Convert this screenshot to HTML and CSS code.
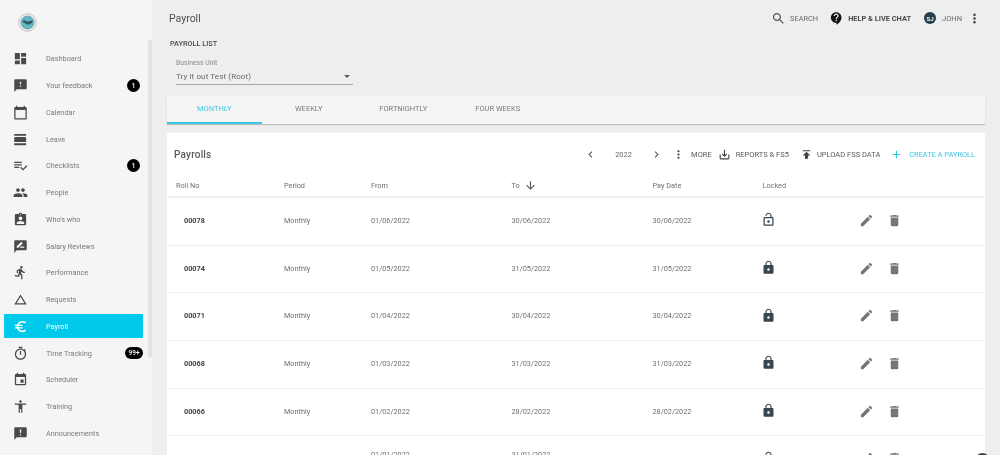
FILE: index.html
```html
<!DOCTYPE html>
<html lang="en">
<head>
<meta charset="utf-8">
<title>Payroll</title>
<link rel="stylesheet" href="styles.css">
</head>
<body>
<svg class="sprite" aria-hidden="true">
<symbol id="i-dashboard" viewBox="0 0 24 24"><path d="M3 13h8V3H3v10zm0 8h8v-6H3v6zm10 0h8V11h-8v10zm0-18v6h8V3h-8z"/></symbol>
<symbol id="i-feedback" viewBox="0 0 24 24"><path d="M20 2H4c-1.1 0-1.99.9-1.99 2L2 22l4-4h14c1.1 0 2-.9 2-2V4c0-1.1-.9-2-2-2zm-7 12h-2v-2h2v2zm0-4h-2V6h2v4z"/></symbol>
<symbol id="i-calendar" viewBox="0 0 24 24"><path d="M20 3h-1V1h-2v2H7V1H5v2H4c-1.1 0-2 .9-2 2v16c0 1.1.9 2 2 2h16c1.1 0 2-.9 2-2V5c0-1.1-.9-2-2-2zm0 18H4V8h16v13z"/></symbol>
<symbol id="i-leave" viewBox="0 0 24 24"><path d="M2 21h19v-3H2v3zM20 8H3c-.55 0-1 .45-1 1v6c0 .55.45 1 1 1h17c.55 0 1-.45 1-1V9c0-.55-.45-1-1-1zM2 3v3h19V3H2z"/></symbol>
<symbol id="i-check" viewBox="0 0 24 24"><path d="M14 10H2v2h12v-2zm0-4H2v2h12V6zM2 16h8v-2H2v2zm19.5-4.5L23 13l-6.99 7-4.51-4.5L13 14l3.01 3 5.49-5.5z"/></symbol>
<symbol id="i-people" viewBox="0 0 24 24"><path d="M16 11c1.66 0 2.99-1.34 2.99-3S17.66 5 16 5c-1.66 0-3 1.34-3 3s1.34 3 3 3zm-8 0c1.66 0 2.99-1.34 2.99-3S9.66 5 8 5C6.34 5 5 6.34 5 8s1.34 3 3 3zm0 2c-2.33 0-7 1.17-7 3.5V19h14v-2.5c0-2.33-4.67-3.5-7-3.5zm8 0c-.29 0-.62.02-.97.05 1.16.84 1.97 1.97 1.97 3.45V19h6v-2.5c0-2.33-4.67-3.5-7-3.5z"/></symbol>
<symbol id="i-who" viewBox="0 0 24 24"><path d="M19 3h-4.18C14.4 1.84 13.3 1 12 1c-1.3 0-2.4.84-2.82 2H5c-1.1 0-2 .9-2 2v14c0 1.1.9 2 2 2h14c1.1 0 2-.9 2-2V5c0-1.1-.9-2-2-2zm-7 0c.55 0 1 .45 1 1s-.45 1-1 1-1-.45-1-1 .45-1 1-1zm0 4c1.66 0 3 1.34 3 3s-1.34 3-3 3-3-1.34-3-3 1.34-3 3-3zm6 12H6v-1.4c0-2 4-3.1 6-3.1s6 1.1 6 3.1V19z"/></symbol>
<symbol id="i-review" viewBox="0 0 24 24"><path d="M20 2H4c-1.1 0-2 .9-2 2v18l4-4h14c1.1 0 2-.9 2-2V4c0-1.1-.9-2-2-2zM6 14v-2.47l6.88-6.88c.2-.2.51-.2.71 0l1.77 1.77c.2.2.2.51 0 .71L8.47 14H6zm12 0h-7.5l2-2H18v2z"/></symbol>
<symbol id="i-run" viewBox="0 0 24 24"><path d="M13.49 5.48c1.1 0 2-.9 2-2s-.9-2-2-2-2 .9-2 2 .9 2 2 2zm-3.6 13.9l1-4.4 2.1 2v6h2v-7.5l-2.1-2 .6-3c1.3 1.5 3.3 2.5 5.5 2.5v-2c-1.9 0-3.5-1-4.3-2.4l-1-1.6c-.4-.6-1-1-1.7-1-.3 0-.5.1-.8.1l-5.2 2.2v4.7h2v-3.4l1.8-.7-1.6 8.1-4.9-1-.4 2 7 1.4z"/></symbol>
<symbol id="i-delta" viewBox="0 0 24 24"><path d="M12 7.77L18.39 18H5.61L12 7.77M12 4L2 20h20L12 4z"/></symbol>
<symbol id="i-euro" viewBox="0 0 24 24"><path d="M15 18.5c-2.51 0-4.68-1.42-5.76-3.5H15v-2H8.58c-.05-.33-.08-.66-.08-1s.03-.67.08-1H15V9H9.24C10.32 6.92 12.5 5.5 15 5.5c1.61 0 3.09.59 4.23 1.57L21 5.3C19.41 3.87 17.3 3 15 3c-3.92 0-7.24 2.51-8.48 6H3v2h3.06c-.04.33-.06.66-.06 1s.02.67.06 1H3v2h3.52c1.24 3.49 4.56 6 8.48 6 2.31 0 4.41-.87 6-2.3l-1.78-1.77c-1.13.98-2.6 1.57-4.22 1.57z"/></symbol>
<symbol id="i-timer" viewBox="0 0 24 24"><path d="M15 1H9v2h6V1zm-4 13h2V8h-2v6zm8.03-6.61l1.42-1.42c-.43-.51-.9-.99-1.41-1.41l-1.42 1.42C16.07 4.74 14.12 4 12 4c-4.97 0-9 4.03-9 9s4.02 9 9 9 9-4.03 9-9c0-2.12-.74-4.07-1.97-5.61zM12 20c-3.87 0-7-3.13-7-7s3.13-7 7-7 7 3.13 7 7-3.13 7-7 7z"/></symbol>
<symbol id="i-event" viewBox="0 0 24 24"><path d="M17 12h-5v5h5v-5zM16 1v2H8V1H6v2H5c-1.11 0-1.99.9-1.99 2L3 19c0 1.1.89 2 2 2h14c1.1 0 2-.9 2-2V5c0-1.1-.9-2-2-2h-1V1h-2zm3 18H5V8h14v11z"/></symbol>
<symbol id="i-train" viewBox="0 0 24 24"><path d="M12 2c1.1 0 2 .9 2 2s-.9 2-2 2-2-.9-2-2 .9-2 2-2zm9 7h-6v13h-2v-6h-2v6H9V9H3V7h18v2z"/></symbol>
<symbol id="i-announce" viewBox="0 0 24 24"><path d="M20 2H4c-1.1 0-1.99.9-1.99 2L2 22l4-4h14c1.1 0 2-.9 2-2V4c0-1.1-.9-2-2-2zm-7 9h-2V5h2v6zm0 4h-2v-2h2v2z"/></symbol>
<symbol id="i-search" viewBox="0 0 24 24"><path d="M15.5 14h-.79l-.28-.27C15.41 12.59 16 11.11 16 9.5 16 5.91 13.09 3 9.5 3S3 5.91 3 9.5 5.91 16 9.5 16c1.61 0 3.09-.59 4.23-1.57l.27.28v.79l5 4.99L20.49 19l-4.99-5zm-6 0C7.01 14 5 11.99 5 9.5S7.01 5 9.5 5 14 7.01 14 9.5 11.99 14 9.5 14z"/></symbol>
<symbol id="i-help" viewBox="0 0 24 24"><path d="M11.5 2C6.81 2 3 5.81 3 10.5S6.81 19 11.5 19h.5v3c4.86-2.34 8-7 8-11.5C20 5.81 16.19 2 11.5 2zm1 14.5h-2v-2h2v2zm0-3.5h-2c0-3.25 3-3 3-5 0-1.1-.9-2-2-2s-2 .9-2 2h-2c0-2.21 1.79-4 4-4s4 1.79 4 4c0 2.5-3 2.75-3 5z"/></symbol>
<symbol id="i-more" viewBox="0 0 24 24"><path d="M12 8c1.1 0 2-.9 2-2s-.9-2-2-2-2 .9-2 2 .9 2 2 2zm0 2c-1.1 0-2 .9-2 2s.9 2 2 2 2-.9 2-2-.9-2-2-2zm0 6c-1.1 0-2 .9-2 2s.9 2 2 2 2-.9 2-2-.9-2-2-2z"/></symbol>
<symbol id="i-left" viewBox="0 0 24 24"><path d="M15.41 7.41L14 6l-6 6 6 6 1.41-1.41L10.83 12z"/></symbol>
<symbol id="i-right" viewBox="0 0 24 24"><path d="M10 6L8.59 7.41 13.17 12l-4.58 4.59L10 18l6-6z"/></symbol>
<symbol id="i-save" viewBox="0 0 24 24"><path d="M19 12v7H5v-7H3v7c0 1.1.9 2 2 2h14c1.1 0 2-.9 2-2v-7h-2zm-6 .67l2.59-2.58L17 11.5l-5 5-5-5 1.41-1.41L11 12.67V3h2z"/></symbol>
<symbol id="i-publish" viewBox="0 0 24 24"><path d="M5 4v2h14V4H5zm0 10h4v6h6v-6h4l-7-7-7 7z"/></symbol>
<symbol id="i-add" viewBox="0 0 24 24"><path d="M19 13h-6v6h-2v-6H5v-2h6V5h2v6h6v2z"/></symbol>
<symbol id="i-down" viewBox="0 0 24 24"><path d="M20 12l-1.41-1.41L13 16.17V4h-2v12.17l-5.58-5.59L4 12l8 8 8-8z"/></symbol>
<symbol id="i-lock" viewBox="0 0 24 24"><path d="M18 8h-1V6c0-2.76-2.24-5-5-5S7 3.24 7 6v2H6c-1.1 0-2 .9-2 2v10c0 1.1.9 2 2 2h12c1.1 0 2-.9 2-2V10c0-1.1-.9-2-2-2zm-6 9c-1.1 0-2-.9-2-2s.9-2 2-2 2 .9 2 2-.9 2-2 2zm3.1-9H8.9V6c0-1.71 1.39-3.1 3.1-3.1 1.71 0 3.1 1.39 3.1 3.1v2z"/></symbol>
<symbol id="i-open" viewBox="0 0 24 24"><path d="M12 17c1.1 0 2-.9 2-2s-.9-2-2-2-2 .9-2 2 .9 2 2 2zm6-9h-1V6c0-2.76-2.24-5-5-5S7 3.24 7 6h1.9c0-1.71 1.39-3.1 3.1-3.1 1.71 0 3.1 1.39 3.1 3.1v2H6c-1.1 0-2 .9-2 2v10c0 1.1.9 2 2 2h12c1.1 0 2-.9 2-2V10c0-1.1-.9-2-2-2zm0 12H6V10h12v10z"/></symbol>
<symbol id="i-edit" viewBox="0 0 24 24"><path d="M3 17.25V21h3.75L17.81 9.94l-3.75-3.75L3 17.25zM20.71 7.04c.39-.39.39-1.02 0-1.41l-2.34-2.34c-.39-.39-1.02-.39-1.41 0l-1.83 1.83 3.75 3.75 1.83-1.83z"/></symbol>
<symbol id="i-delete" viewBox="0 0 24 24"><path d="M6 19c0 1.1.9 2 2 2h8c1.1 0 2-.9 2-2V7H6v12zM19 4h-3.5l-1-1h-5l-1 1H5v2h14V4z"/></symbol>
</svg>

<div class="app">
  <aside class="sidebar">
    <div class="logo">
      <svg class="logo-mark" viewBox="0 0 20 20" aria-hidden="true">
        <circle cx="10" cy="10" r="9.2" fill="#f4f4f4" stroke="#a8a8a8" stroke-width=".7"/>
        <circle cx="10" cy="10" r="7" fill="#5fb7c7" stroke="#8a8a8a" stroke-width=".6"/>
        <path d="M4.5 8.5c2-1.5 3-.8 4 0s3 .2 7-1l-.8 3c-2 .8-2.7 2.3-4.7 1.5S5.5 10.5 4.5 8.5z" fill="#35575f"/>
      </svg>
    </div>
    <nav class="nav">
      <a class="nav-item"><svg class="nav-icon"><use href="#i-dashboard"/></svg><span class="nav-label">Dashboard</span></a>
      <a class="nav-item"><svg class="nav-icon"><use href="#i-feedback"/></svg><span class="nav-label">Your feedback</span><span class="badge">1</span></a>
      <a class="nav-item"><svg class="nav-icon"><use href="#i-calendar"/></svg><span class="nav-label">Calendar</span></a>
      <a class="nav-item"><svg class="nav-icon"><use href="#i-leave"/></svg><span class="nav-label">Leave</span></a>
      <a class="nav-item"><svg class="nav-icon"><use href="#i-check"/></svg><span class="nav-label">Checklists</span><span class="badge">1</span></a>
      <a class="nav-item"><svg class="nav-icon"><use href="#i-people"/></svg><span class="nav-label">People</span></a>
      <a class="nav-item"><svg class="nav-icon"><use href="#i-who"/></svg><span class="nav-label">Who's who</span></a>
      <a class="nav-item"><svg class="nav-icon"><use href="#i-review"/></svg><span class="nav-label">Salary Reviews</span></a>
      <a class="nav-item"><svg class="nav-icon"><use href="#i-run"/></svg><span class="nav-label">Performance</span></a>
      <a class="nav-item"><svg class="nav-icon"><use href="#i-delta"/></svg><span class="nav-label">Requests</span></a>
      <a class="nav-item active"><span class="active-pill"><svg class="nav-icon"><use href="#i-euro"/></svg><span class="nav-label">Payroll</span></span></a>
      <a class="nav-item"><svg class="nav-icon"><use href="#i-timer"/></svg><span class="nav-label">Time Tracking</span><span class="badge wide">99+</span></a>
      <a class="nav-item"><svg class="nav-icon"><use href="#i-event"/></svg><span class="nav-label">Scheduler</span></a>
      <a class="nav-item"><svg class="nav-icon"><use href="#i-train"/></svg><span class="nav-label">Training</span></a>
      <a class="nav-item"><svg class="nav-icon"><use href="#i-announce"/></svg><span class="nav-label">Announcements</span></a>
    </nav>
    <div class="side-scroll"></div>
  </aside>

  <main class="main">
    <header class="topbar">
      <h1 class="page-title">Payroll</h1>
      <div class="top-actions">
        <svg class="top-icon search-icon"><use href="#i-search"/></svg>
        <span class="top-text search-text">SEARCH</span>
        <svg class="top-icon help-icon"><use href="#i-help"/></svg>
        <span class="top-text help-text">HELP &amp; LIVE CHAT</span>
        <span class="avatar">SJ</span>
        <span class="top-text user-text">JOHN</span>
        <svg class="top-icon more-icon"><use href="#i-more"/></svg>
      </div>
    </header>

    <h2 class="section-label">PAYROLL LIST</h2>

    <div class="field">
      <div class="field-label">Business Unit</div>
      <div class="field-select"><span>Try it out Test (Root)</span><i class="caret"></i></div>
    </div>

    <div class="tabs">
      <span class="tab selected">MONTHLY</span>
      <span class="tab">WEEKLY</span>
      <span class="tab">FORTNIGHTLY</span>
      <span class="tab">FOUR WEEKS</span>
    </div>

    <section class="card">
      <div class="toolbar">
        <h3 class="card-title">Payrolls</h3>
        <div class="tools">
          <svg class="tool-icon chev"><use href="#i-left"/></svg>
          <span class="year">2022</span>
          <svg class="tool-icon chev"><use href="#i-right"/></svg>
          <svg class="tool-icon t-more"><use href="#i-more"/></svg>
          <span class="tool-text t-more-text">MORE</span>
          <svg class="tool-icon t-save"><use href="#i-save"/></svg>
          <span class="tool-text t-save-text">REPORTS &amp; FS5</span>
          <svg class="tool-icon t-pub"><use href="#i-publish"/></svg>
          <span class="tool-text t-pub-text">UPLOAD FSS DATA</span>
          <svg class="tool-icon t-add"><use href="#i-add"/></svg>
          <span class="tool-text t-add-text">CREATE A PAYROLL</span>
        </div>
      </div>

      <div class="row head">
        <span class="cell">Roll No</span>
        <span class="cell">Period</span>
        <span class="cell">From</span>
        <span class="cell sort">To<svg class="sort-icon"><use href="#i-down"/></svg></span>
        <span class="cell">Pay Date</span>
        <span class="cell">Locked</span>
      </div>

      <div class="row">
        <span class="cell roll">00078</span><span class="cell">Monthly</span><span class="cell">01/06/2022</span><span class="cell">30/06/2022</span><span class="cell">30/06/2022</span>
        <span class="cell"><svg class="lock"><use href="#i-open"/></svg></span>
        <span class="cell acts"><svg class="act"><use href="#i-edit"/></svg><svg class="act"><use href="#i-delete"/></svg></span>
      </div>
      <div class="row">
        <span class="cell roll">00074</span><span class="cell">Monthly</span><span class="cell">01/05/2022</span><span class="cell">31/05/2022</span><span class="cell">31/05/2022</span>
        <span class="cell"><svg class="lock"><use href="#i-lock"/></svg></span>
        <span class="cell acts"><svg class="act"><use href="#i-edit"/></svg><svg class="act"><use href="#i-delete"/></svg></span>
      </div>
      <div class="row">
        <span class="cell roll">00071</span><span class="cell">Monthly</span><span class="cell">01/04/2022</span><span class="cell">30/04/2022</span><span class="cell">30/04/2022</span>
        <span class="cell"><svg class="lock"><use href="#i-lock"/></svg></span>
        <span class="cell acts"><svg class="act"><use href="#i-edit"/></svg><svg class="act"><use href="#i-delete"/></svg></span>
      </div>
      <div class="row">
        <span class="cell roll">00068</span><span class="cell">Monthly</span><span class="cell">01/03/2022</span><span class="cell">31/03/2022</span><span class="cell">31/03/2022</span>
        <span class="cell"><svg class="lock"><use href="#i-lock"/></svg></span>
        <span class="cell acts"><svg class="act"><use href="#i-edit"/></svg><svg class="act"><use href="#i-delete"/></svg></span>
      </div>
      <div class="row">
        <span class="cell roll">00066</span><span class="cell">Monthly</span><span class="cell">01/02/2022</span><span class="cell">28/02/2022</span><span class="cell">28/02/2022</span>
        <span class="cell"><svg class="lock"><use href="#i-lock"/></svg></span>
        <span class="cell acts"><svg class="act"><use href="#i-edit"/></svg><svg class="act"><use href="#i-delete"/></svg></span>
      </div>
      <div class="row">
        <span class="cell"></span><span class="cell"></span><span class="cell lifted">01/01/2022</span><span class="cell lifted">31/01/2022</span><span class="cell"></span>
        <span class="cell"><svg class="lock"><use href="#i-open"/></svg></span>
        <span class="cell acts"><svg class="act"><use href="#i-edit"/></svg><svg class="act"><use href="#i-delete"/></svg></span>
      </div>
    </section>
  </main>
</div>
<div class="fab"></div>
</body>
</html>
```

FILE: styles.css
```css
* { box-sizing: border-box; }
html, body { margin: 0; padding: 0; height: 455px; overflow: hidden; }
body { font-family: Roboto, "Liberation Sans", sans-serif; font-size: 7.3px; color: #707070; background: #eeeeee; }
svg { fill: currentColor; display: block; flex: none; }
.sprite { width: 0; height: 0; position: absolute; }

.app { display: flex; height: 455px; overflow: hidden; will-change: transform; }

/* Sidebar */
.sidebar { width: 152px; flex: none; background: #f5f5f5; position: relative; }
.logo { height: 45.5px; padding: 13px 0 0 17.5px; }
.logo-mark { width: 19px; height: 19px; }
.nav { display: flex; flex-direction: column; padding-right: 9px; }
.nav-item { height: 26.75px; flex: none; display: flex; align-items: center; padding-left: 12.5px; color: #7a7a7a; font-size: 7.3px; position: relative; }
.nav-icon { width: 15px; height: 15px; color: #4a4a4a; margin-right: 18.5px; }
.nav-label { flex: 1; white-space: nowrap; }
.badge { width: 13px; height: 13px; border-radius: 50%; background: #000; color: #fff; font-size: 7px; font-weight: 500; display: flex; align-items: center; justify-content: center; margin-right: 3px; }
.badge.wide { width: 18px; height: 12px; border-radius: 6px; margin-right: 0; font-size: 6.5px; }
.nav-item.active { padding-left: 4px; }
.active-pill { display: flex; align-items: center; width: 139px; height: 24px; padding-left: 8.5px; background: #00c9ea; border-radius: 1px; color: #fff; }
.active-pill .nav-icon { color: #fff; }
.side-scroll { position: absolute; left: 148px; top: 40px; width: 4px; height: 317px; background: #e3e3e3; }

/* Main */
.main { flex: 1; min-width: 0; padding-left: 15px; padding-right: 15px; }
.topbar { height: 36px; display: flex; align-items: center; justify-content: space-between; padding-left: 2px; }
.page-title { margin: 0; font-size: 10.5px; font-weight: 400; color: #505050; }
.top-actions { display: flex; align-items: center; margin-right: 3px; color: #6a6a6a; }
.top-icon { width: 15px; height: 15px; }
.top-text { font-size: 7.5px; white-space: nowrap; }
.search-icon { color: #555; }
.search-text { margin-left: 4px; font-size: 7.4px; }
.help-icon { margin-left: 11px; color: #111; }
.help-text { margin-left: 4px; font-size: 7.4px; font-weight: 700; color: #4a4a4a; }
.avatar { width: 12px; height: 12px; margin-left: 13px; border-radius: 50%; background: #1f3f49; color: #fff; font-size: 6px; font-weight: 700; display: flex; align-items: center; justify-content: center; }
.user-text { margin-left: 6px; }
.more-icon { margin-left: 5px; color: #424242; }

.section-label { margin: 3px 0 0 3px; font-size: 7.3px; font-weight: 500; line-height: 9px; color: #4a4a4a; }
.field { width: 177px; margin: 11px 0 0 9px; }
.field-label { font-size: 6.8px; line-height: 8px; color: #8a8a8a; }
.field-select { height: 18px; display: flex; align-items: center; justify-content: space-between; border-bottom: 1px solid #a8a8a8; font-size: 8px; letter-spacing: .12px; color: #6a6a6a; padding: 1px 3px 0 0; }
.caret { width: 0; height: 0; border-left: 3.5px solid transparent; border-right: 3.5px solid transparent; border-top: 3.5px solid #616161; }

.tabs { display: flex; height: 28px; margin-top: 11px; background: #f5f5f5; box-shadow: 0 1px 1px rgba(0,0,0,.2); }
.tab { width: 94.5px; height: 28px; display: flex; align-items: center; justify-content: center; font-size: 7.5px; color: #7a7a7a; padding-bottom: 3px; }
.tab.selected { color: #35c8e2; border-bottom: 2px solid #35c8e2; padding-bottom: 1px; }

.card { margin-top: 9px; background: #fff; height: 340px; }
.toolbar { height: 42px; display: flex; align-items: center; justify-content: space-between; padding: 0 10px 0 7px; }
.card-title { margin: 0; font-size: 10px; font-weight: 500; color: #5a5a5a; letter-spacing: .2px; }
.tools { display: flex; align-items: center; }
.tool-icon { width: 13px; height: 13px; color: #424242; }
.tool-text { font-size: 7.5px; color: #5a5a5a; white-space: nowrap; }
.year { width: 61px; text-align: center; font-size: 7.5px; color: #6a6a6a; margin: 0 -4px; }
.chev { color: #555; }
.t-more { margin-left: 9px; }
.t-more-text { margin-left: 6px; }
.t-save { margin-left: 6px; }
.t-save-text { margin-left: 5px; }
.t-pub { margin-left: 11px; }
.t-pub-text { margin-left: 4px; }
.t-add { margin-left: 10px; color: #35c8e2; }
.t-add-text { margin-left: 6px; font-size: 7.4px; color: #35c8e2; }

.row { display: grid; grid-template-columns: 108px 87px 140.5px 141px 110px 96px 1fr; height: 47.7px; align-items: center; padding-left: 9px; padding-bottom: 2px; border-bottom: 1px solid #eeeeee; font-size: 7.3px; color: #707070; }
.row.head { height: 23px; padding-bottom: 0; border-bottom: 2px solid #eeeeee; }
.cell { display: flex; align-items: center; white-space: nowrap; }
.lifted { margin-bottom: 9px; }
.roll { padding-left: 8px; font-weight: 700; color: #444; }
.sort-icon { width: 13px; height: 13px; margin-left: 4px; color: #555; }
.lock { width: 15px; height: 15px; color: #37474f; margin: -1px 0 0 -2px; }
.acts { gap: 13px; }
.act { width: 15px; height: 15px; color: #757575; }

.fab { position: absolute; left: 975px; top: 453px; width: 15px; height: 15px; border-radius: 50%; background: #37474f; }
```
